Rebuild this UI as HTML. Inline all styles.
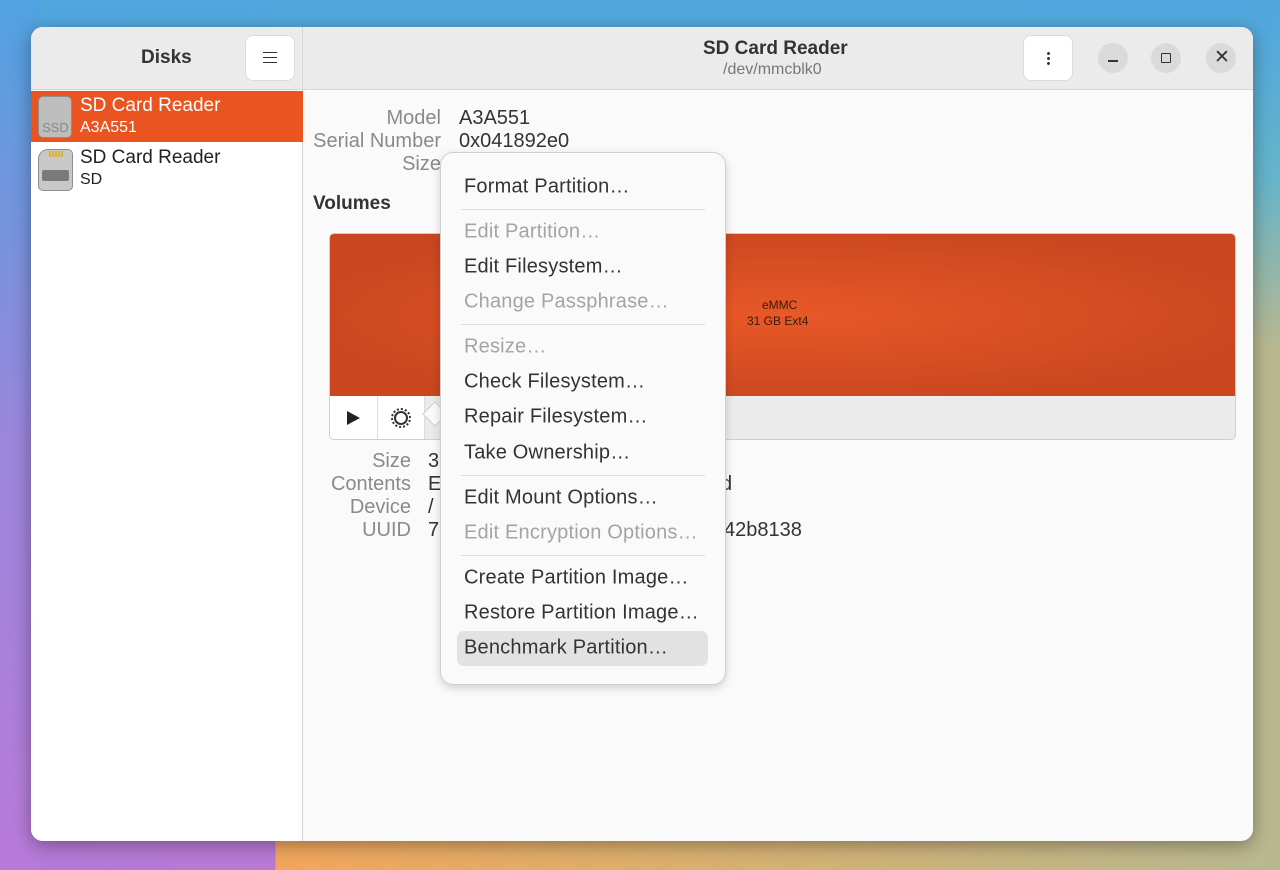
<!DOCTYPE html>
<html><head><meta charset="utf-8"><style>
*{margin:0;padding:0;box-sizing:border-box}
body{width:1280px;height:870px;overflow:hidden;position:relative;font-family:"Liberation Sans",sans-serif;
background:linear-gradient(180deg,rgba(80,166,222,1) 0%,rgba(90,180,210,.9) 20%,rgba(0,0,0,0) 40%),linear-gradient(90deg,#b47ad8 0,#b87ad4 275px,#f2a65c 276px,#d8b070 700px,#b8b890 1280px);}
.bgl{position:absolute;left:0;top:0;width:40px;height:870px;background:linear-gradient(180deg,#50a2e0,#9a86dc 50%,#b87ad8)}
.win{position:absolute;left:31px;top:27px;width:1222px;height:814px;border-radius:12px;overflow:hidden;background:#fafafa;box-shadow:0 4px 18px rgba(0,0,0,.35)}
.sb{position:absolute;left:0;top:0;width:272px;height:814px;background:#fff;border-right:1px solid #d6d6d6}
.hd{position:absolute;left:0;top:0;width:1222px;height:63px;background:#ebebeb;border-bottom:1px solid #d8d8d8}
.sbh{position:absolute;left:0;top:0;width:272px;height:63px;border-right:1px solid #d6d6d6}
.btn{position:absolute;background:#fff;border-radius:7px;box-shadow:0 0 0 1px #dcdcdc}
.t{position:absolute;white-space:nowrap;color:#333}
.circ{position:absolute;width:30px;height:30px;border-radius:50%;background:#dadada;top:16px}
.menu{position:absolute;left:441px;top:153px;width:284px;height:531px;background:#fafafa;border-radius:12px;box-shadow:0 0 0 1px #cfcfcf,0 3px 10px rgba(0,0,0,.2)}
.mi{position:absolute;left:23px;font-size:20px;letter-spacing:.2px;color:#333;white-space:nowrap;transform:translateY(-50%)}
.dis{color:#a4a4a4}
.sep{position:absolute;left:20px;width:244px;height:1px;background:#dedede}
.lab{position:absolute;font-size:20px;color:#8a8a8a;text-align:right;white-space:nowrap}
.val{position:absolute;font-size:20px;color:#333;white-space:nowrap}
</style></head><body>
<div class="bgl"></div>
<div class="win">
<div class="sb"></div>
<div class="hd"><div class="sbh"></div></div>
<div class="t" style="left:110px;top:20px;font-size:19px;font-weight:bold">Disks</div>
<div class="btn" style="left:215px;top:9px;width:48px;height:44px"></div>
<div style="position:absolute;left:232px;top:25px;width:14px;height:11px;border-top:1.5px solid #333;border-bottom:1.5px solid #333"><div style="margin-top:3.5px;height:1.5px;background:#333"></div></div>
<div class="t" style="left:672px;top:11px;font-size:19px;font-weight:bold">SD Card Reader</div>
<div class="t" style="left:692px;top:34px;font-size:16px;color:#777">/dev/mmcblk0</div>
<div class="btn" style="left:993px;top:9px;width:48px;height:44px"></div>
<div style="position:absolute;left:1016px;top:24px;width:3px;height:14px;background:radial-gradient(circle,#333 1.3px,transparent 1.6px) 0 0/3px 5px"></div>
<div class="circ" style="left:1067px"></div><div style="position:absolute;left:1077px;top:33px;width:10px;height:1.5px;background:#333"></div>
<div class="circ" style="left:1120px"></div><div style="position:absolute;left:1130px;top:26px;width:10px;height:10px;border:1.5px solid #333;border-radius:1px"></div>
<div class="circ" style="left:1175px"></div><div class="t" style="left:1183px;top:19px;font-size:19px">✕</div>
<div style="position:absolute;left:0;top:64px;width:272px;height:51px;background:#e95420"></div>
<div style="position:absolute;left:7px;top:69px;width:34px;height:42px;background:#bdbdbd;border-radius:5px;border:1px solid #8e8e8e"></div>
<div class="t" style="left:11px;top:93px;font-size:13px;color:#8a8a8a">SSD</div>
<div class="t" style="left:49px;top:68px;font-size:19px;color:#fff">SD Card Reader</div>
<div class="t" style="left:49px;top:92px;font-size:16px;color:#fff">A3A551</div>
<div style="position:absolute;left:7px;top:122px;width:35px;height:42px;background:#c8c8c8;border-radius:10px 5px 5px 5px;border:1px solid #8e8e8e"></div>
<div style="position:absolute;left:18px;top:124px;width:14px;height:6px;background:repeating-linear-gradient(90deg,#e0b030 0 2px,transparent 2px 3px)"></div>
<div style="position:absolute;left:11px;top:143px;width:27px;height:11px;background:#7a7a7a;border-radius:2px"></div>
<div class="t" style="left:49px;top:120px;font-size:19px;color:#222">SD Card Reader</div>
<div class="t" style="left:49px;top:144px;font-size:16px;color:#222">SD</div>
<div class="lab" style="right:812px;top:80px">Model</div><div class="val" style="left:428px;top:80px">A3A551</div>
<div class="lab" style="right:812px;top:103px">Serial Number</div><div class="val" style="left:428px;top:103px">0x041892e0</div>
<div class="lab" style="right:812px;top:126px">Size</div>
<div class="t" style="left:282px;top:166px;font-size:19px;font-weight:bold">Volumes</div>
<div style="position:absolute;left:298px;top:206px;width:907px;height:207px;border:1px solid #cfcfcf;border-radius:5px;overflow:hidden;background:#ebebeb">
<div style="height:162px;background:radial-gradient(ellipse at 50% 50%,#e85828,#c9461f 80%)"></div>
<div style="position:absolute;left:0;top:162px;width:95px;height:45px;background:#fff;border-right:1px solid #ddd"></div>
<div style="position:absolute;left:47px;top:162px;width:1px;height:45px;background:#ddd"></div>
<div style="position:absolute;left:17px;top:177px;width:0;height:0;border-left:13px solid #222;border-top:7.5px solid transparent;border-bottom:7.5px solid transparent"></div>
<div style="position:absolute;left:61px;top:174px;width:20px;height:20px;border-radius:50%;border:2.5px dotted #333"></div>
<div style="position:absolute;left:64px;top:177px;width:14px;height:14px;border-radius:50%;border:2px solid #333"></div>
</div>
<div class="t" style="left:731px;top:271px;font-size:12px;color:#3a1a0a">eMMC</div>
<div class="t" style="left:716px;top:287px;font-size:12px;color:#3a1a0a">31 GB Ext4</div>
<div class="lab" style="right:842px;top:423px">Size</div><div class="val" style="left:397px;top:423px">3</div>
<div class="lab" style="right:842px;top:446px">Contents</div><div class="val" style="left:397px;top:446px">E</div><div class="val" style="left:690px;top:446px">d</div>
<div class="lab" style="right:842px;top:469px">Device</div><div class="val" style="left:397px;top:469px">/</div>
<div class="lab" style="right:842px;top:492px">UUID</div><div class="val" style="left:397px;top:492px">7</div><div class="val" style="left:693px;top:492px">42b8138</div>
</div>
<div style="position:absolute;left:427px;top:406px;width:16px;height:16px;background:#fafafa;transform:rotate(45deg);box-shadow:0 0 0 1px #cfcfcf"></div>
<div class="menu">
<div style="position:absolute;left:16px;top:478px;width:251px;height:35px;background:#e2e2e2;border-radius:7px"></div>
<div class="mi" style="top:34px">Format Partition…</div>
<div class="sep" style="top:56px"></div>
<div class="mi dis" style="top:79px">Edit Partition…</div>
<div class="mi" style="top:114px">Edit Filesystem…</div>
<div class="mi dis" style="top:149px">Change Passphrase…</div>
<div class="sep" style="top:171px"></div>
<div class="mi dis" style="top:194px">Resize…</div>
<div class="mi" style="top:229px">Check Filesystem…</div>
<div class="mi" style="top:264px">Repair Filesystem…</div>
<div class="mi" style="top:300px">Take Ownership…</div>
<div class="sep" style="top:322px"></div>
<div class="mi" style="top:345px">Edit Mount Options…</div>
<div class="mi dis" style="top:380px">Edit Encryption Options…</div>
<div class="sep" style="top:402px"></div>
<div class="mi" style="top:425px">Create Partition Image…</div>
<div class="mi" style="top:460px">Restore Partition Image…</div>
<div class="mi" style="top:495px">Benchmark Partition…</div>
</div>
</body></html>
